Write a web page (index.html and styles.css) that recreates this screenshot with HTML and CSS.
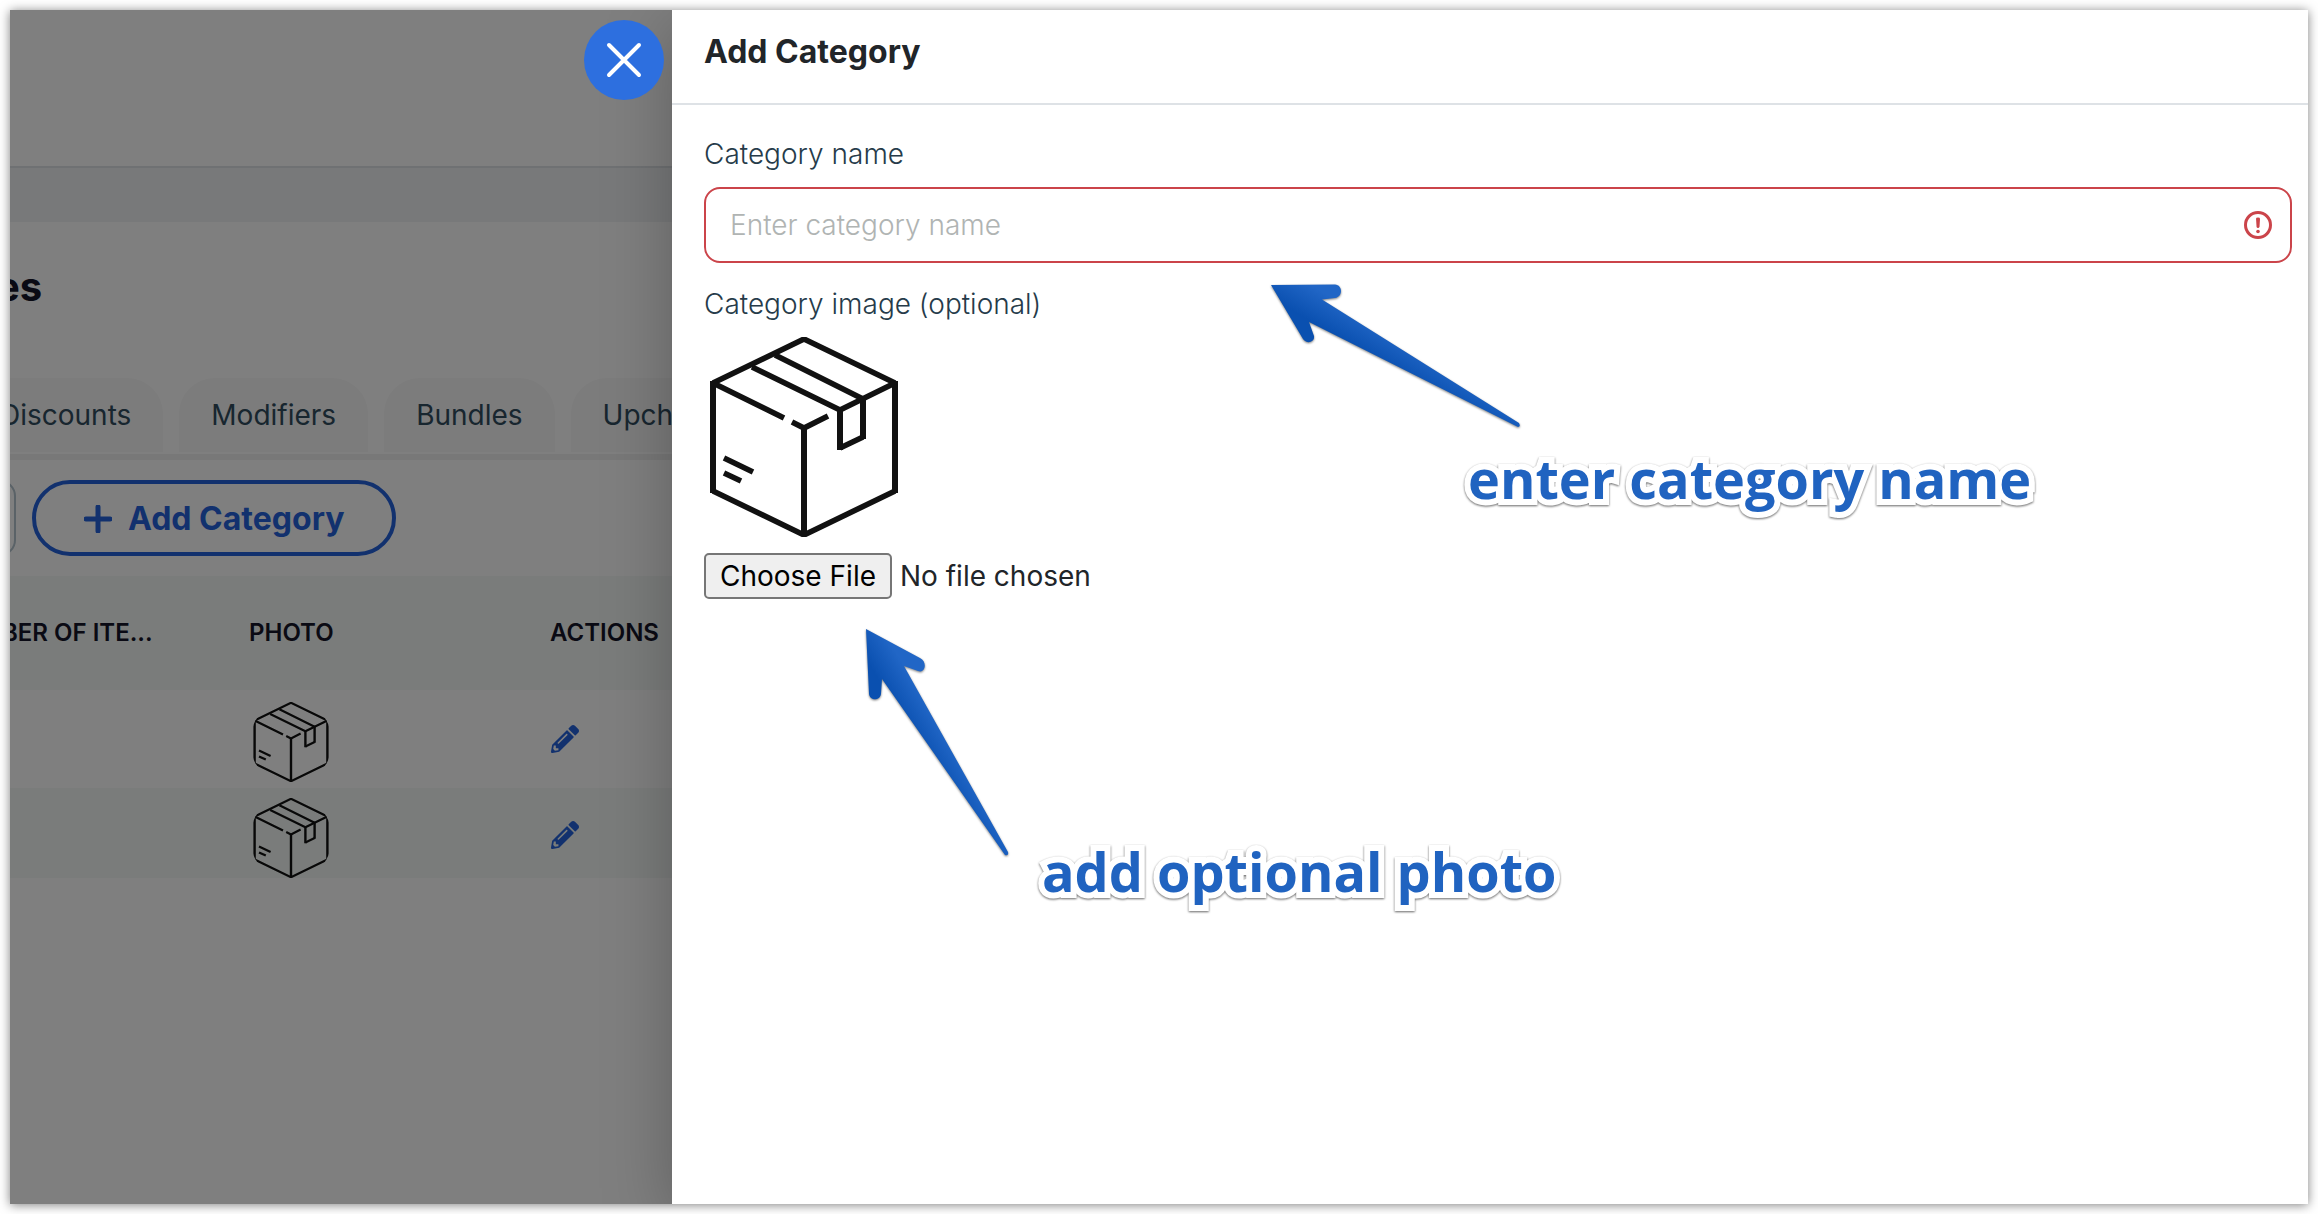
FILE: index.html
```html
<!DOCTYPE html>
<html lang="en">
<head>
<meta charset="utf-8">
<title>Add Category</title>
<meta name="viewport" content="width=device-width, initial-scale=1">
<link rel="stylesheet" href="styles.css">
</head>
<body>
<svg class="defs" aria-hidden="true">
  <symbol id="box" viewBox="0 0 200 200">
    <g fill="none" stroke="#111">
      <g stroke-width="5.600">
        <path d="M9 46 100 2 191 46M191 154 100 198 9 154"/>
        <path d="M48 30 136 73M136 111 159 100M159 62 71 18"/>
        <path d="M136 73 191 46M9 46 80 81M88 85 100 91 124 79"/>
        <path d="M20 121 49 135M20 136 37 144"/>
      </g>
      <path stroke-width="6" d="M9 44V156M191 44V156M100 90V198M136 71V113M159 60V102"/>
    </g>
  </symbol>
  <symbol id="pencil" viewBox="0 0 512 512">
    <path fill="currentColor" d="M497.900 142.100l-46.100 46.100c-4.700 4.700-12.300 4.700-17 0l-111-111c-4.700-4.700-4.700-12.300 0-17l46.100-46.100c18.700-18.700 49.100-18.700 67.900 0l60.100 60.100c18.800 18.700 18.800 49.100 0 67.900zM284.200 99.800L21.600 362.400.4 483.900c-2.900 16.400 11.400 30.600 27.800 27.800l121.500-21.300 262.600-262.600c4.700-4.700 4.700-12.300 0-17l-111-111c-4.800-4.700-12.400-4.700-17.100 0zM124.100 339.900c-5.500-5.500-5.500-14.300 0-19.800l154-154c5.500-5.500 14.300-5.500 19.800 0s5.500 14.300 0 19.800l-154 154c-5.500 5.500-14.300 5.500-19.800 0zM88 424h48v36.300l-64.500 11.300-31.100-31.100L51.700 376H88v48z"/>
  </symbol>
</svg>

<div class="app">
  <main class="page">
    <header class="topbar"></header>
    <section class="content">
      <h1 class="page-title">es</h1>
      <nav class="tabs">
        <a class="tab" href="#discounts">Discounts</a>
        <a class="tab" href="#modifiers">Modifiers</a>
        <a class="tab" href="#bundles">Bundles</a>
        <a class="tab" href="#upch">Upch</a>
      </nav>
      <div class="toolbar">
        <input class="search" type="text" aria-label="Search">
        <button class="add-button" type="button">
          <svg class="plus" viewBox="0 0 28 28" aria-hidden="true"><path d="M14 2V26M2 14H26"/></svg>
          Add Category
        </button>
      </div>
      <table class="items">
        <thead>
          <tr><th class="col-count">BER OF ITE...</th><th class="col-photo">PHOTO</th><th>ACTIONS</th></tr>
        </thead>
        <tbody>
          <tr>
            <td></td>
            <td><svg class="thumb" aria-hidden="true"><use href="#box"/></svg></td>
            <td><button class="edit" type="button" aria-label="Edit"><svg class="pencil"><use href="#pencil"/></svg></button></td>
          </tr>
          <tr>
            <td></td>
            <td><svg class="thumb" aria-hidden="true"><use href="#box"/></svg></td>
            <td><button class="edit" type="button" aria-label="Edit"><svg class="pencil"><use href="#pencil"/></svg></button></td>
          </tr>
        </tbody>
      </table>
    </section>
    <div class="backdrop"></div>
  </main>

  <aside class="drawer">
    <button class="close" type="button" aria-label="Close">
      <svg class="close-icon" viewBox="0 0 36 36" aria-hidden="true"><path d="M3 3 33 33M33 3 3 33"/></svg>
    </button>
    <header class="drawer-header"><h2 class="drawer-title">Add Category</h2></header>
    <form class="form">
      <label class="label" for="name">Category name</label>
      <div class="field">
        <input class="input" id="name" type="text" placeholder="Enter category name">
        <svg class="alert" viewBox="0 0 28 28" aria-hidden="true">
          <circle cx="14" cy="14" r="12.500" fill="none" stroke="#cb444a" stroke-width="3"/>
          <path fill="#cb444a" d="M12 7.500Q12 6.500 14 6.500T16 7.500L15.500 15.500Q15.300 17 14 17T12.500 15.500Z"/>
          <circle cx="14" cy="20.500" r="1.800" fill="#cb444a"/>
        </svg>
      </div>
      <label class="label" for="image">Category image (optional)</label>
      <svg class="preview" aria-hidden="true"><use href="#box"/></svg>
      <input class="file" id="image" type="file">
    </form>
  </aside>
</div>

<svg class="arrow arrow-name" viewBox="0 0 260 150" aria-hidden="true">
  <defs><linearGradient id="blue-a" gradientUnits="userSpaceOnUse" x1="118" y1="87" x2="134" y2="60"><stop offset="0" stop-color="#0a50b0"/><stop offset="1" stop-color="#2166c6"/></linearGradient></defs>
  <path fill="url(#blue-a)" d="M1 5 65 4.500C73 5 73 17 65 18L52 19.500 249 143Q251 147 248 147L39 42 44 56C45 63 36 64 33 59Z"/>
</svg>
<svg class="arrow arrow-photo" viewBox="0 0 150 235" aria-hidden="true">
  <defs><linearGradient id="blue-b" gradientUnits="userSpaceOnUse" x1="48" y1="112" x2="73" y2="97"><stop offset="0" stop-color="#0a50b0"/><stop offset="1" stop-color="#2166c6"/></linearGradient></defs>
  <path fill="url(#blue-b)" d="M1 4 55 33C63 37 60 49 53 46L39 41 143 227Q144 231 140 230L17 54 16 69C15 76 5 76 4 69Z"/>
</svg>
<p class="note note-name">enter category name</p>
<p class="note note-photo">add optional photo</p>
</body>
</html>
```
FILE: styles.css
```css
*, *::before, *::after { box-sizing: border-box; }
body {
  position: relative;
  min-height: 100vh;
  margin: 0;
  padding: 10px;
  display: flex;
  background: #fff;
  font-family: Inter, "Liberation Sans", sans-serif;
  font-size: 28px;
  line-height: 40px;
}
h1, h2, p { margin: 0; }
button, input { font: inherit; }
.defs { position: absolute; width: 0; height: 0; }

.app {
  flex: 1;
  display: grid;
  grid-template-columns: minmax(0, 662px) minmax(0, 1fr);
  overflow: hidden;
  background: #fff;
  box-shadow: 0 1px 10px rgba(0, 0, 0, .5);
}

/* page behind the drawer */
.page { position: relative; overflow: hidden; }
.topbar { height: 158px; border-bottom: 2px solid #dee2e6; }
.content { border-top: 54px solid #f1f3f5; }
.page-title {
  margin-left: -14px;
  padding: 39px 0 41px;
  font-size: 40px;
  font-weight: 700;
  line-height: 52px;
  color: #141428;
}
.tabs {
  display: flex;
  gap: 16px;
  margin: 24px 0 0 -42px;
  padding-bottom: 2px;
  border-bottom: 6px solid #f0f0f0;
}
.tab {
  flex: none;
  height: 74px;
  padding: 17px 32px;
  border-radius: 36px 36px 0 0;
  background: #f8f8f8;
  color: #304c5e;
  text-decoration: none;
}
.toolbar { display: flex; gap: 16px; padding: 20px 0; margin-left: -94px; }
.search {
  width: 100px;
  height: 76px;
  border: 2px solid #b4c4ce;
  border-radius: 16px;
  background: #fff;
}
.add-button {
  display: flex;
  align-items: center;
  gap: 16px;
  height: 76px;
  padding: 2px 48px 0;
  border: 4px solid #2563dc;
  border-radius: 38px;
  background: #fff;
  color: #2563dc;
  font-size: 32px;
  font-weight: 700;
}
.plus { width: 28px; height: 28px; fill: none; stroke: currentColor; stroke-width: 5; stroke-linecap: round; }

.items { width: 100%; border-collapse: collapse; table-layout: fixed; }
.items th {
  height: 114px;
  padding: 0;
  background: #f4f9f6;
  color: #141428;
  font-size: 24px;
  font-weight: 600;
  text-align: left;
}
.col-count { width: 239px; text-indent: -8px; }
.col-photo { width: 301px; }
.items td { height: 98px; padding: 12px 0 0; vertical-align: top; }
.items tr:nth-child(2) td { height: 90px; padding-top: 10px; background: #f4f9f6; }
.thumb { display: block; width: 80px; height: 80px; margin-left: 2px; border-radius: 36px; }
.edit { display: block; margin: 23px 0 0 1px; padding: 0; border: 0; background: none; color: #2563dc; }
.pencil { display: block; width: 28px; height: 28px; }
.backdrop { position: absolute; inset: 0; background: rgba(0, 0, 0, .5); }

/* drawer */
.drawer { position: relative; background: #fff; box-shadow: 0 16px 64px rgba(0, 0, 0, .26); }
.close {
  position: absolute;
  top: 10px;
  right: 100%;
  display: grid;
  place-items: center;
  width: 80px;
  height: 80px;
  margin-right: 8px;
  padding: 0;
  border: 0;
  border-radius: 50%;
  background: #2d6fdf;
}
.close-icon { width: 36px; height: 36px; fill: none; stroke: #fff; stroke-width: 4; stroke-linecap: round; }
.drawer-header { padding: 22px 32px 31px; border-bottom: 2px solid #dee2e6; }
.drawer-title { font-size: 32px; font-weight: 700; line-height: 40px; color: #212529; }
.form { display: flex; flex-direction: column; padding: 29px 16px 32px 32px; }
.label { margin-bottom: 12px; font-weight: 300; line-height: 41px; color: #263b4a; }
.field { position: relative; margin-bottom: 21px; }
.input {
  display: block;
  width: 100%;
  height: 76px;
  padding: 0 72px 0 24px;
  border: 2px solid #cb444a;
  border-radius: 16px;
  background: #fff;
  color: #263b4a;
  font-weight: 300;
}
.input::placeholder { color: #b0b4b3; opacity: 1; }
.alert { position: absolute; top: 24px; right: 20px; width: 28px; height: 28px; }
.preview { width: 200px; height: 200px; margin-bottom: 16px; }
.file { color: #212529; }
.file::file-selector-button {
  height: 46px;
  margin-right: 8px;
  padding: 0 14px;
  border: 2px solid #767676;
  border-radius: 5px;
  background: #efefef;
  color: #000;
  font: inherit;
}

/* annotations floating over the drawer */
.arrow { position: absolute; filter: drop-shadow(0 1px 1px rgba(0, 0, 0, .5)); }
.arrow-name { left: 1270px; top: 280px; width: 260px; height: 150px; }
.arrow-photo { left: 865px; top: 625px; width: 150px; height: 235px; }
.note {
  position: absolute;
  color: #2063c0;
  font-family: "Open Sans", "Noto Sans", sans-serif;
  font-size: 54px;
  font-weight: 700;
  line-height: 76px;
  white-space: nowrap;
  -webkit-text-stroke: 12px #fff;
  paint-order: stroke fill;
  filter: drop-shadow(0 1px 1px rgba(0, 0, 0, .6));
}
.note-name { left: 1468px; top: 440px; }
.note-photo { left: 1042px; top: 833px; }
```
